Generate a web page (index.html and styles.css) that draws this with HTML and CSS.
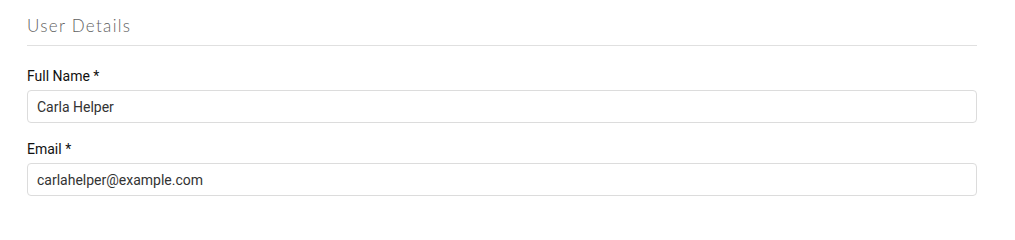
FILE: index.html
```html
<!DOCTYPE html>
<html>
<head>
<meta charset="utf-8">
<link rel="stylesheet" href="styles.css">
</head>
<body>
<section class="panel">
  <h2 class="panel-title">User Details</h2>
  <div class="field">
    <label class="field-label">Full Name *</label>
    <input class="field-input" type="text" value="Carla Helper">
  </div>
  <div class="field">
    <label class="field-label">Email *</label>
    <input class="field-input" type="text" value="carlahelper@example.com">
  </div>
</section>
</body>
</html>
```
FILE: styles.css
```css
html, body {
  margin: 0;
  padding: 0;
  background: #fff;
}
.panel {
  width: 950px;
  margin-left: 27px;
  font-family: Roboto, "Liberation Sans", sans-serif;
}
.panel-title {
  margin: 0;
  padding-top: 14px;
  height: 31px;
  line-height: 24px;
  font-family: Lato, "Open Sans", sans-serif;
  font-weight: 300;
  font-size: 17px;
  letter-spacing: 1.3px;
  color: #5f5f5f;
  border-bottom: 1px solid #e0e0e0;
  box-sizing: content-box;
}
.field {
  display: flex;
  flex-direction: column;
  margin-bottom: 16px;
}
.panel-title + .field {
  margin-top: 20px;
}
.field-label {
  font-size: 14px;
  line-height: 20px;
  color: #111;
  margin-bottom: 4px;
}
.field-input {
  box-sizing: border-box;
  height: 33px;
  width: 100%;
  margin: 0;
  padding: 0 9px;
  border: 1px solid #dcdcdc;
  border-radius: 4px;
  font-family: Roboto, "Liberation Sans", sans-serif;
  font-size: 14px;
  color: #333;
  background: #fff;
  outline: none;
}
```
